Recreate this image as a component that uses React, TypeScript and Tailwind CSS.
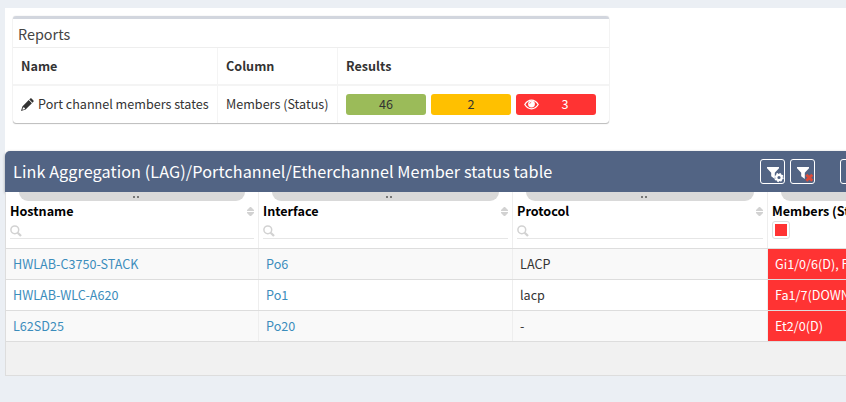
import React from "react";

const edge = "border-[#eee]";

function Pencil() {
  return (
    <svg className="mr-1 h-[13px] w-[13px] shrink-0" viewBox="0 0 13 13" fill="#333">
      <path d="M9.200.6q.7-.7 1.400 0l1.800 1.800q.7.700 0 1.400l-.9.900-3.200-3.200zM7.700 2.100l3.200 3.200-6.300 6.300L0 13l1.400-4.600zM2.100 9.200l-.7 2.200.4.400 2.200-.7-.3-1.300-1.200-.2z" fillRule="evenodd" />
    </svg>
  );
}

function Eye() {
  return (
    <svg className="absolute left-2 top-[5px] h-[11px] w-[15px]" viewBox="0 0 15 11" fill="none" stroke="#fff">
      <path d="M.8 5.500Q3.500 1.200 7.500 1.200t6.700 4.300Q11.500 9.800 7.500 9.800T.8 5.500z" strokeWidth="1.300" />
      <circle cx="7.500" cy="5.100" r="3.400" fill="#fff" stroke="none" />
      <path d="M5.700 5q0-1.700 1.600-1.900" stroke="#ff6b6b" strokeWidth=".8" />
    </svg>
  );
}

function Funnel({ kind }: { kind: "cog" | "clear" | "none" }) {
  return (
    <div className="h-[25px] w-[25px] shrink-0 rounded-[3px] border border-white">
      <svg className="h-[23px] w-[23px]" viewBox="0 0 23 23">
        {kind !== "none" && <path d="M6 7h12v1.200l-4.200 4.500V19L10.200 16.300v-3.600L6 8.200z" fill="#fff" />}
        {kind === "cog" && (
          <>
            <circle cx="18" cy="17.500" r="2.700" fill="#526484" stroke="#fff" strokeWidth="2.200" />
            <circle cx="18" cy="17.500" r="4" fill="none" stroke="#fff" strokeWidth="1.300" strokeDasharray="1.570 1.570" />
          </>
        )}
        {kind === "clear" && <path d="m15.300 14.800 6 6m0-6-6 6" stroke="#dd4b39" strokeWidth="2.800" />}
      </svg>
    </div>
  );
}

function Sort() {
  return (
    <svg className="mr-px h-[9px] w-[7px]" viewBox="0 0 7 9" fill="#d2d2d2">
      <path d="M3 0h1l3 3v1H0V3zM0 5h7v1L4 9H3L0 6z" />
    </svg>
  );
}

function HeadCell({ title, filter = true }: { title: string; filter?: boolean }) {
  return (
    <div className={`h-14 border-r ${edge} pl-1 pr-[3px]`}>
      <div className="ml-[9px] mr-[10px] flex h-[9px] items-center justify-center gap-[2px] rounded-b-[9px] bg-[#d9d9d9] pl-[7px]">
        <i className="h-[2px] w-[2px] bg-[#777]" />
        <i className="h-[2px] w-[2px] bg-[#777]" />
      </div>
      <div className="flex h-[21px] items-center justify-between whitespace-nowrap text-[12.600px] font-bold text-black">
        <span>{title}</span>
        {filter && <Sort />}
      </div>
      {filter ? (
        <div className="mr-px flex h-[17px] items-center border-b border-[#e6e6e6]">
          <svg className="mt-px h-3 w-3" viewBox="0 0 12 12" fill="none" stroke="#d2d2d2">
            <circle cx="4.800" cy="4.800" r="3.900" strokeWidth="1.500" />
            <path d="m7.700 7.700 3.300 3.300" strokeWidth="2.300" />
          </svg>
        </div>
      ) : (
        <div className="-mt-px h-[18px] w-[18px] rounded-[3px] border border-[#ddd] bg-white p-[2px]">
          <div className="h-3 w-3 bg-[#ff3333]" />
        </div>
      )}
    </div>
  );
}

const rows = [
  ["HWLAB-C3750-STACK", "Po6", "LACP", "Gi1/0/6(D), Fa1/0/7(D)"],
  ["HWLAB-WLC-A620", "Po1", "lacp", "Fa1/7(DOWN)"],
  ["L62SD25", "Po20", "-", "Et2/0(D)"],
];

export default function App() {
  return (
    <div className="h-[402px] w-[846px] overflow-hidden bg-[#ebeff4] pl-[5px] pt-2 font-['Noto_Sans_CJK_SC',sans-serif] text-[12.600px] text-[#333]">
      <div className="h-[368px] w-[1000px] bg-white pt-2">
        <section className="ml-2 h-[107px] w-[596px] rounded-[3px] border-t-[3px] border-[#d2d6de] shadow-[0_1px_1px_rgba(0,0,0,0.250),0_0_1px_rgba(0,0,0,0.250)]">
          <h2 className={`flex h-[29px] items-center border-b ${edge} pl-[5px] pt-[2px] text-[14.400px] text-[#444]`}>Reports</h2>
          <div className="grid h-[38px] grid-cols-[205px_120px_1fr] border-b-2 border-[#f4f4f4] font-bold">
            <div className="flex items-center border-r border-[#f4f4f4] pl-2">Name</div>
            <div className="flex items-center border-r border-[#f4f4f4] pl-2">Column</div>
            <div className="flex items-center pl-2">Results</div>
          </div>
          <div className="grid h-[37px] grid-cols-[205px_120px_1fr] whitespace-nowrap">
            <div className="flex items-center border-r border-[#f4f4f4] pl-2"><Pencil /><span>Port channel members states</span></div>
            <div className="flex items-center border-r border-[#f4f4f4] pl-2"><span>Members (Status)</span></div>
            <div className="flex items-center gap-[5px] pl-2">
              <div className="flex h-[21px] w-20 items-center justify-center rounded-[3px] bg-[#9bbb59]">46</div>
              <div className="flex h-[21px] w-20 items-center justify-center rounded-[3px] bg-[#ffc000]">2</div>
              <div className="relative flex h-[21px] w-20 items-center justify-center rounded-[3px] bg-[#ff3333] pl-[18px] text-white"><Eye />3</div>
            </div>
          </div>
        </section>
        <section className="mt-7">
          <header className="flex h-[41px] items-center rounded-tl-[5px] bg-[#526484] pl-2 shadow-[0_1px_3px_rgba(0,0,0,0.350)]">
            <h1 className="w-[747px] whitespace-nowrap text-[16.200px] tracking-[0.090px] text-white">Link Aggregation (LAG)/Portchannel/Etherchannel Member status table</h1>
            <div className="flex gap-[5px]"><Funnel kind="cog" /><Funnel kind="clear" /></div>
            <div className="ml-[25px]"><Funnel kind="none" /></div>
          </header>
          <div className="relative h-[184px] border-b border-l border-[#ddd] bg-[#f1f1f1]">
            <div className="grid grid-cols-[253px_254px_255px_254px] bg-white">
              <HeadCell title="Hostname" />
              <HeadCell title="Interface" />
              <HeadCell title="Protocol" />
              <HeadCell title="Members (Status)" filter={false} />
            </div>
            {rows.map((row, i) => (
              <div key={row[0]} className={`grid h-[31px] grid-cols-[253px_254px_255px_254px] border-t border-[#ddd] ${i % 2 ? "bg-white" : "bg-[#f9f9f9]"}`}>
                <div className={`flex items-center border-r ${edge} pl-[7px] text-[#3c8dbc]`}><span>{row[0]}</span></div>
                <div className={`flex items-center border-r ${edge} pl-[7px] text-[#3c8dbc]`}><span>{row[1]}</span></div>
                <div className={`flex items-center border-r ${edge} pl-[7px]`}><span>{row[2]}</span></div>
                <div className="flex items-center whitespace-nowrap bg-[#ff3333] pl-[7px] text-white"><span>{row[3]}</span></div>
              </div>
            ))}
            <div className="h-px bg-[#ddd]" />
          </div>
        </section>
      </div>
    </div>
  );
}
